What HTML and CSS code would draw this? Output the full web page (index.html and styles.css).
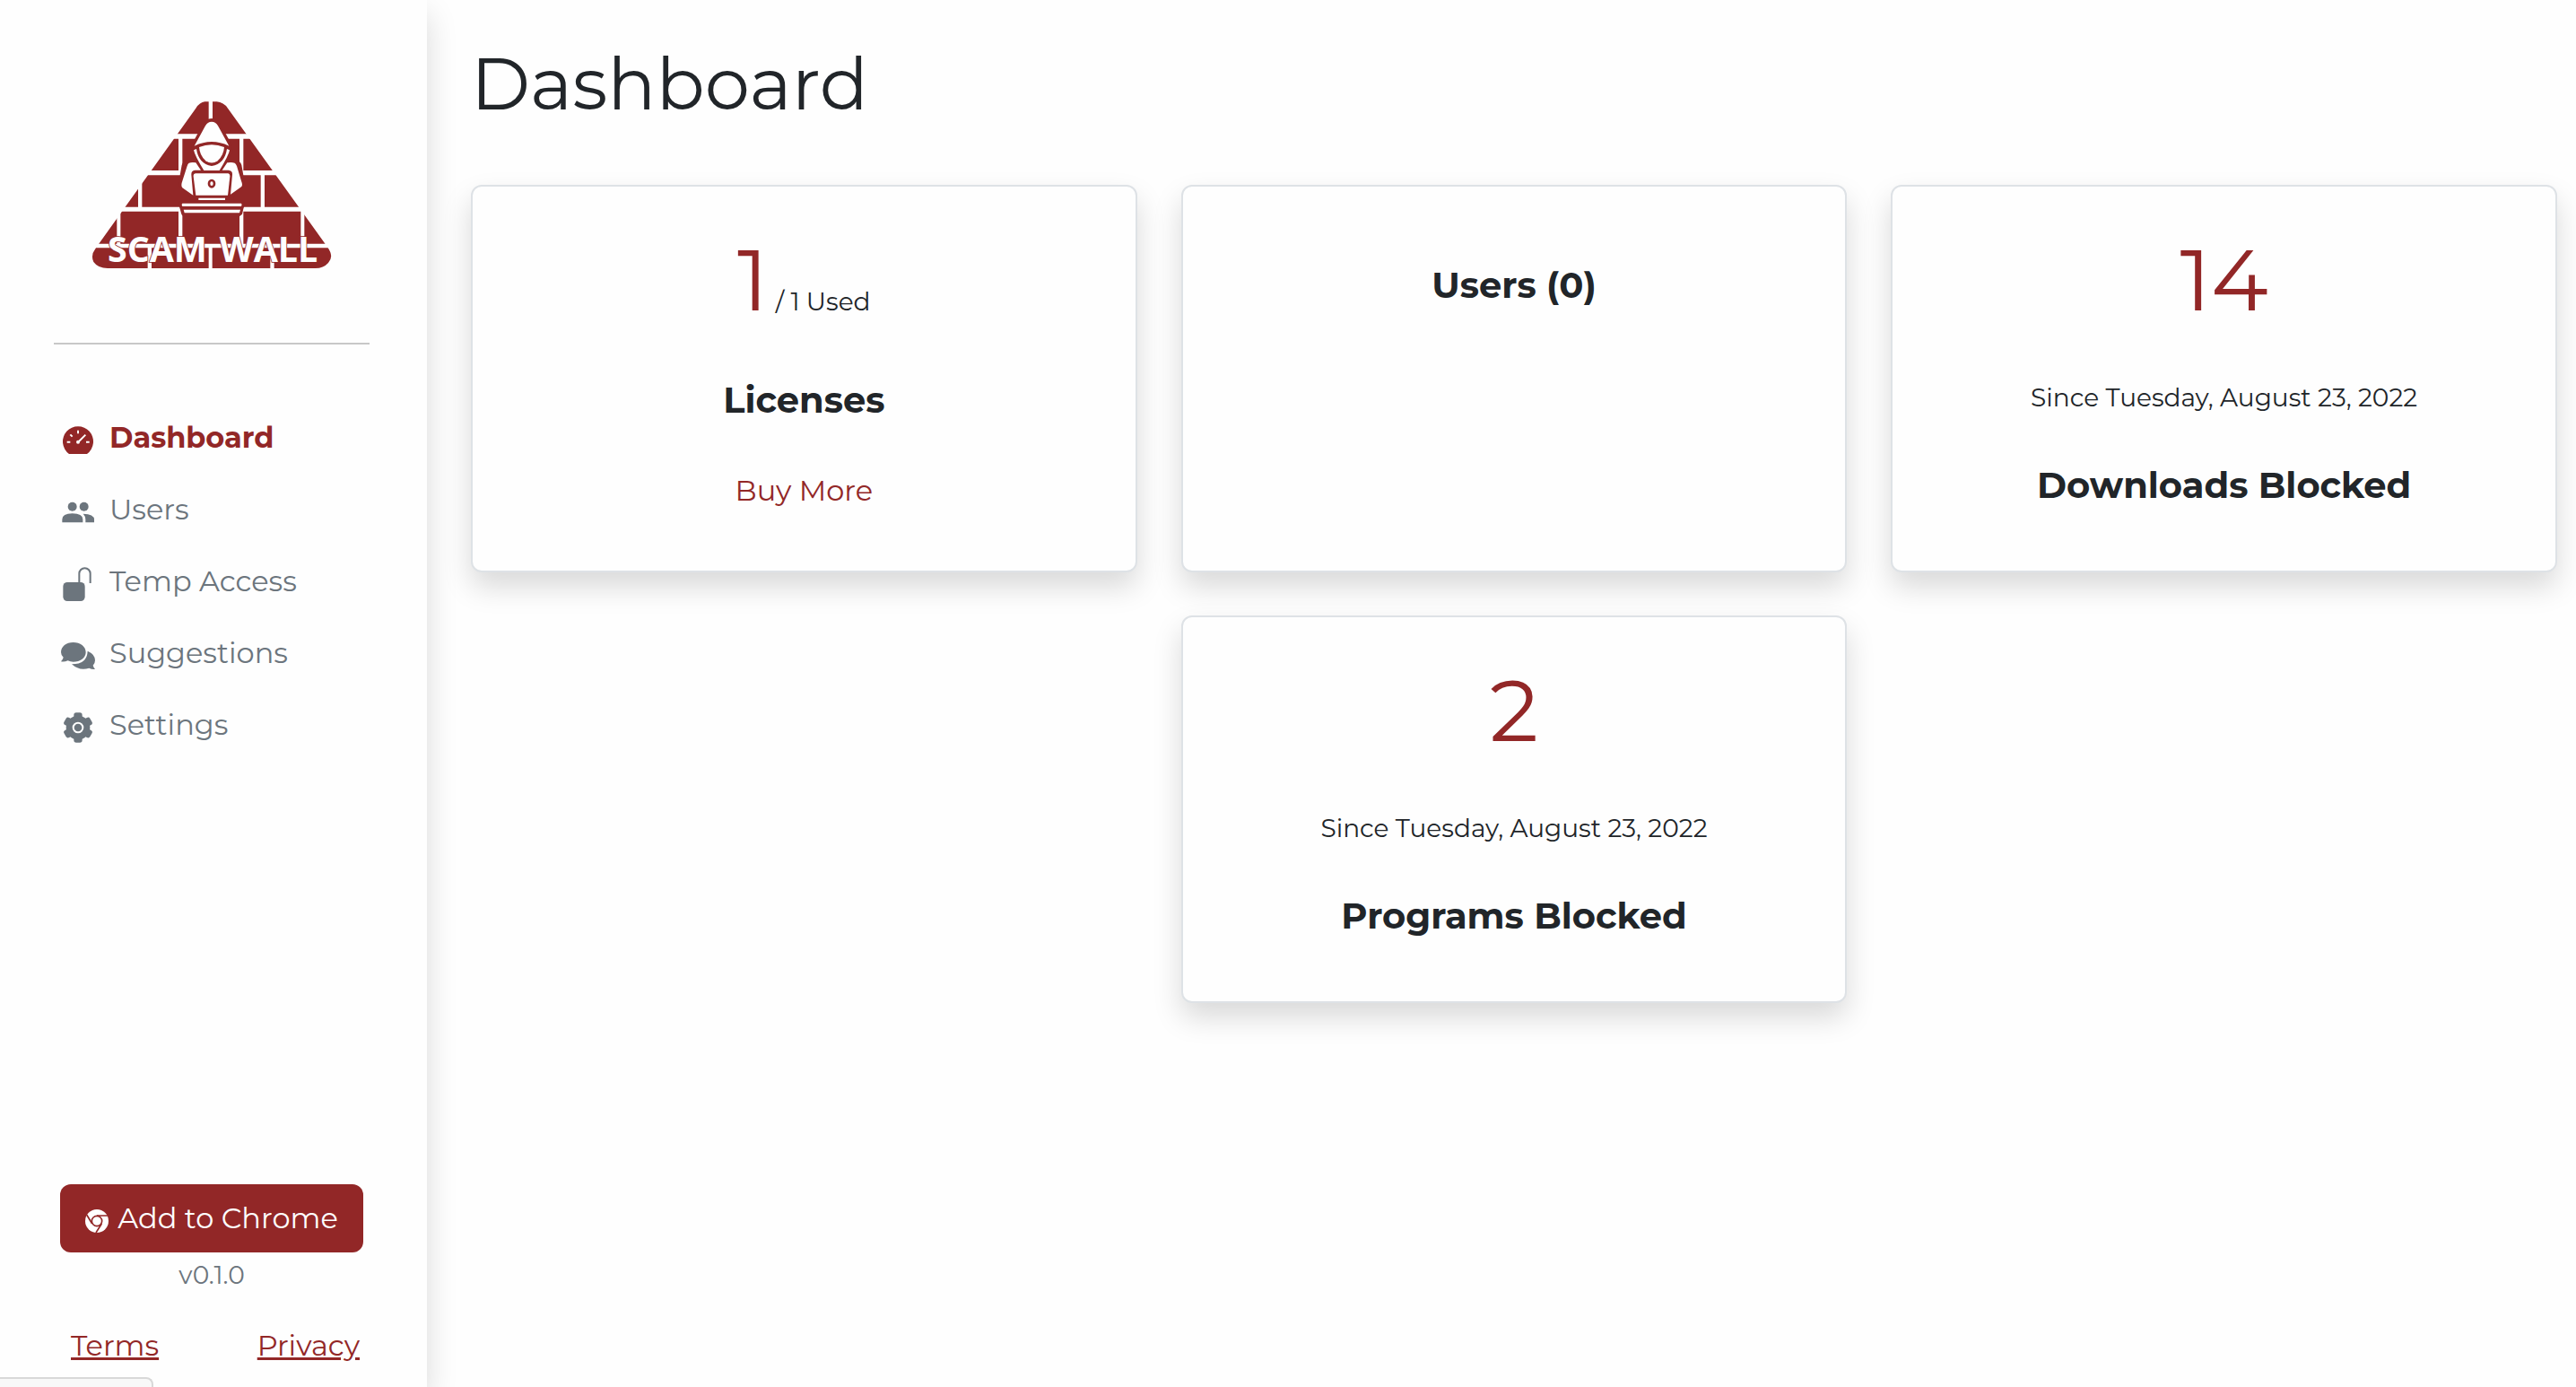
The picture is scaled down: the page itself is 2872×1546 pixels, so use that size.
FILE: index.html
```html
<!DOCTYPE html>
<html lang="en">
<head>
    <meta charset="UTF-8">
    <meta name="viewport" content="width=device-width, initial-scale=1.0">
    <title>Scam Wall - Dashboard</title>
    <link rel="stylesheet" href="styles.css">
</head>
<body>

<div class="layout">
    <aside class="sidebar">
        <a class="logo" href="#" aria-label="Scam Wall">
            <svg viewBox="0 0 930 690">
                <!-- Brick triangle -->
                <path class="brand" d="M445 70H485Q508 72 522 92L856 557Q878 588 858 609Q842 627 815 627H120Q88 627 73 606Q62 583 80 560L415 92Q428 72 445 70Z"/>
                <path class="mortar" d="M340 178H600V194H340ZM250 300H690V316H250ZM160 422H780V437H160ZM70 545H870V559H70Z"/>
                <path class="mortar" d="M458 60H471V130H458ZM357 190H370V305H357ZM561 190H574V305H561ZM222 310H235V428H222ZM632 310H645V428H632ZM151 430H163V550H151ZM357 430H370V550H357ZM561 430H574V550H561ZM766 430H778V550H766ZM254 555H267V630H254ZM458 555H470V630H458ZM664 555H677V630H664Z"/>
                <!-- Hacker -->
                <path class="brand" d="M468 126Q488 127 498 146L535 214L538 240L518 268L552 266Q564 268 568 282L580 350L545 380L540 400H572Q582 412 574 428L570 446Q564 454 552 454H384Q370 454 367 446L362 428Q354 412 364 400H396L391 380L356 350L368 282Q372 268 384 266L418 268L398 240L401 214L438 146Q448 127 468 126Z"/>
                <path class="mortar" d="M468 137Q482 137 490 152L526 218Q468 190 410 218L446 152Q454 137 468 137Z"/>
                <path class="mortar" d="M408 232L417 228Q424 278 468 285Q512 278 519 228L528 232Q524 252 494 300H442Q412 252 408 232Z"/>
                <path class="mortar" d="M426 222Q468 205 510 222Q508 250 488 268Q468 281 448 268Q428 250 426 222Z"/>
                <path class="mortar" d="M392 275Q402 271 415 274L432 299H412Q399 300 400 314L406 383L370 358Q364 350 370 335L386 285Q388 278 392 275Z"/>
                <path class="mortar" d="M545 275Q535 271 520 274L503 299H524Q538 300 537 314L531 380L567 355Q573 350 567 335L552 285Q549 278 545 275Z"/>
                <path class="mortar" d="M415 310H522Q530 311 529 320L522 383H415L407 320Q406 311 415 310Z"/>
                <ellipse class="ring" cx="468" cy="344" rx="9" ry="11"/>
                <path class="mortar" d="M424 392H513V399H424ZM370 410H567Q570 415 567 420H370Q366 415 370 410ZM374 431H564L561 442H377Z"/>
                <text class="logo-text" x="120" y="606">SCAM</text>
                <text class="logo-text" x="494" y="606">WALL</text>
            </svg>
        </a>
        <hr class="divider">
        <nav class="menu">
            <a class="menu-item active" href="#">
                <svg class="icon" viewBox="0 0 114 114">
                    <path d="M27 102A51 51 0 1 1 87 102Z"/>
                    <path class="cut" d="M57 23V34M20 62H31M84 62H95M31 37L38 44M82 38L60 60"/>
                    <circle class="hole" cx="57" cy="62" r="6"/>
                </svg>
                <span>Dashboard</span>
            </a>
            <a class="menu-item" href="#">
                <svg class="icon" viewBox="0 0 114 114">
                    <circle cx="38" cy="38" r="15"/>
                    <circle cx="77" cy="38" r="15"/>
                    <path d="M4 91V81Q4 61 38 61Q73 61 73 81V91ZM74 62Q111 62 111 82V91H82V81Q82 70 74 62Z"/>
                </svg>
                <span>Users</span>
            </a>
            <a class="menu-item" href="#">
                <svg class="icon" viewBox="0 0 114 114">
                    <rect x="7" y="51" width="73" height="63" rx="14"/>
                    <path class="line" d="M61 56V22A18 18 0 0 1 98 22V54"/>
                </svg>
                <span>Temp Access</span>
            </a>
            <a class="menu-item" href="#">
                <svg class="icon" viewBox="0 0 114 114">
                    <path d="M41 12C64 12 83 26 83 45S64 77 41 77Q31 77 23 73Q12 78 0 76Q6 70 8 62Q0 55 0 45C0 26 18 12 41 12Z"/>
                    <path d="M89 41Q114 52 114 72Q114 82 107 89Q109 96 114 102Q103 103 94 98Q62 109 36 85Q88 84 89 41Z"/>
                </svg>
                <span>Suggestions</span>
            </a>
            <a class="menu-item" href="#">
                <svg class="icon" viewBox="0 0 114 114">
                    <circle cx="57" cy="57" r="40"/>
                    <rect x="43" y="7" width="28" height="100" rx="8"/>
                    <rect x="43" y="7" width="28" height="100" rx="8" transform="rotate(60 57 57)"/>
                    <rect x="43" y="7" width="28" height="100" rx="8" transform="rotate(120 57 57)"/>
                    <circle class="cut" cx="57" cy="57" r="16"/>
                </svg>
                <span>Settings</span>
            </a>
        </nav>

        <div class="sidebar-footer">
            <button class="chrome-btn" type="button">
                <svg class="chrome-icon" viewBox="0 0 78 78">
                    <circle cx="39" cy="39" r="39"/>
                    <circle class="chrome-line" cx="39" cy="39" r="17"/>
                    <path class="chrome-line" d="M39 21H76M23 48L5 18M55 48L36 78"/>
                </svg>
                Add to Chrome
            </button>
            <span class="version">v0.1.0</span>
            <div class="legal">
                <a href="#">Terms</a>
                <a href="#">Privacy</a>
            </div>
        </div>
    </aside>

    <main class="content">
        <h1>Dashboard</h1>
        <div class="cards">
            <section class="card">
                <div class="count">1 <small>/ 1 Used</small></div>
                <h2>Licenses</h2>
                <a class="buy" href="#">Buy More</a>
            </section>
            <section class="card card-users">
                <h2>Users (0)</h2>
            </section>
            <section class="card">
                <div class="count">14</div>
                <p>Since Tuesday, August 23, 2022</p>
                <h2>Downloads Blocked</h2>
            </section>
            <section class="card card-middle">
                <div class="count">2</div>
                <p>Since Tuesday, August 23, 2022</p>
                <h2>Programs Blocked</h2>
            </section>
        </div>
    </main>
</div>

<div class="status-bar"></div>

</body>
</html>
```
FILE: styles.css
```css
* {
    box-sizing: border-box;
}
body {
    margin: 0;
    font-family: Montserrat, Inter, sans-serif;
    font-size: 32px;
    font-weight: 400;
    line-height: 48px;
    color: #212529;
    background-color: #fefefe;
}
a {
    color: #922727;
}
.layout {
    display: flex;
    min-height: 100vh;
}

/* Sidebar */
.sidebar {
    display: flex;
    flex-direction: column;
    flex: none;
    width: 476px;
    padding: 90px 64px 22px 60px;
    box-shadow: 0 16px 32px rgba(0, 0, 0, 0.15);
}
.logo {
    display: block;
    width: 310px;
    height: 230px;
    margin-left: 20px;
}
.logo svg {
    display: block;
    width: 100%;
}
.brand {
    fill: #922727;
}
.mortar {
    fill: #fefefe;
}
.ring {
    fill: none;
    stroke: #922727;
    stroke-width: 8;
}
.logo-text {
    font-family: "Open Sans", sans-serif;
    font-size: 118px;
    font-weight: 700;
    fill: #fefefe;
    stroke: #922727;
    stroke-width: 5;
    paint-order: stroke;
}
.divider {
    width: 100%;
    height: 2px;
    margin: 62px 0 64px;
    border: 0;
    background-color: #c8c8c8;
}
.menu-item {
    display: flex;
    align-items: center;
    gap: 16px;
    height: 80px;
    padding-left: 8px;
    color: #6c757d;
    text-decoration: none;
}
.menu-item.active {
    color: #922727;
    font-weight: 700;
}
.icon {
    width: 38px;
    height: 38px;
    margin-top: 6px;
    fill: currentColor;
}
.icon .cut {
    fill: none;
    stroke: #fefefe;
    stroke-width: 6;
}
.icon .hole {
    fill: #fefefe;
}
.icon .line {
    fill: none;
    stroke: currentColor;
    stroke-width: 6;
}
.sidebar-footer {
    display: flex;
    flex-direction: column;
    align-items: center;
    margin-top: auto;
}
.chrome-btn {
    display: flex;
    align-items: center;
    justify-content: center;
    gap: 10px;
    width: 338px;
    height: 76px;
    padding: 0;
    border: 0;
    border-radius: 12px;
    background-color: #922727;
    color: #fff;
    font: inherit;
    cursor: pointer;
}
.chrome-icon {
    width: 26px;
    height: 26px;
    margin-top: 6px;
    fill: #fff;
}
.chrome-line {
    fill: none;
    stroke: #922727;
    stroke-width: 5;
}
.version {
    margin: 4px 0 34px;
    font-size: 28px;
    line-height: 42px;
    color: #6c757d;
}
.legal {
    display: flex;
    justify-content: space-between;
    width: 100%;
    padding: 0 11px 0 19px;
}

/* Content */
.content {
    flex: 1;
    padding: 46px 21px 48px 49px;
}
h1 {
    margin: 0 0 64px;
    font-size: 80px;
    font-weight: 400;
    line-height: 96px;
}
.cards {
    display: grid;
    grid-template-columns: repeat(3, 1fr);
    grid-auto-rows: 1fr;
    gap: 48px 49px;
}
.card {
    display: flex;
    flex-direction: column;
    align-items: center;
    gap: 53px;
    padding: 46px 46px 65px;
    border: 2px solid #dee2e6;
    border-radius: 12px;
    background-color: #fefefe;
    box-shadow: 0 16px 32px rgba(0, 0, 0, 0.15);
}
.card-users {
    padding-top: 86px;
}
.card-middle {
    grid-column: 2;
}
.count {
    display: flex;
    align-items: baseline;
    gap: 8px;
    height: 115px;
    font-size: 96px;
    line-height: 115px;
    color: #922727;
}
.count small {
    font-size: 28px;
    line-height: 42px;
    color: #212529;
}
.card h2 {
    margin: 0;
    font-size: 40px;
    font-weight: 700;
    line-height: 48px;
}
.card p {
    margin: 0;
    font-size: 28px;
    line-height: 42px;
}
.buy {
    text-decoration: none;
}

/* Link preview in the corner */
.status-bar {
    position: fixed;
    left: 0;
    bottom: 0;
    width: 171px;
    height: 11px;
    border: 2px solid #d8d8d8;
    border-width: 2px 2px 0 0;
    border-top-right-radius: 8px;
    background-color: #f8f8f8;
}
```
